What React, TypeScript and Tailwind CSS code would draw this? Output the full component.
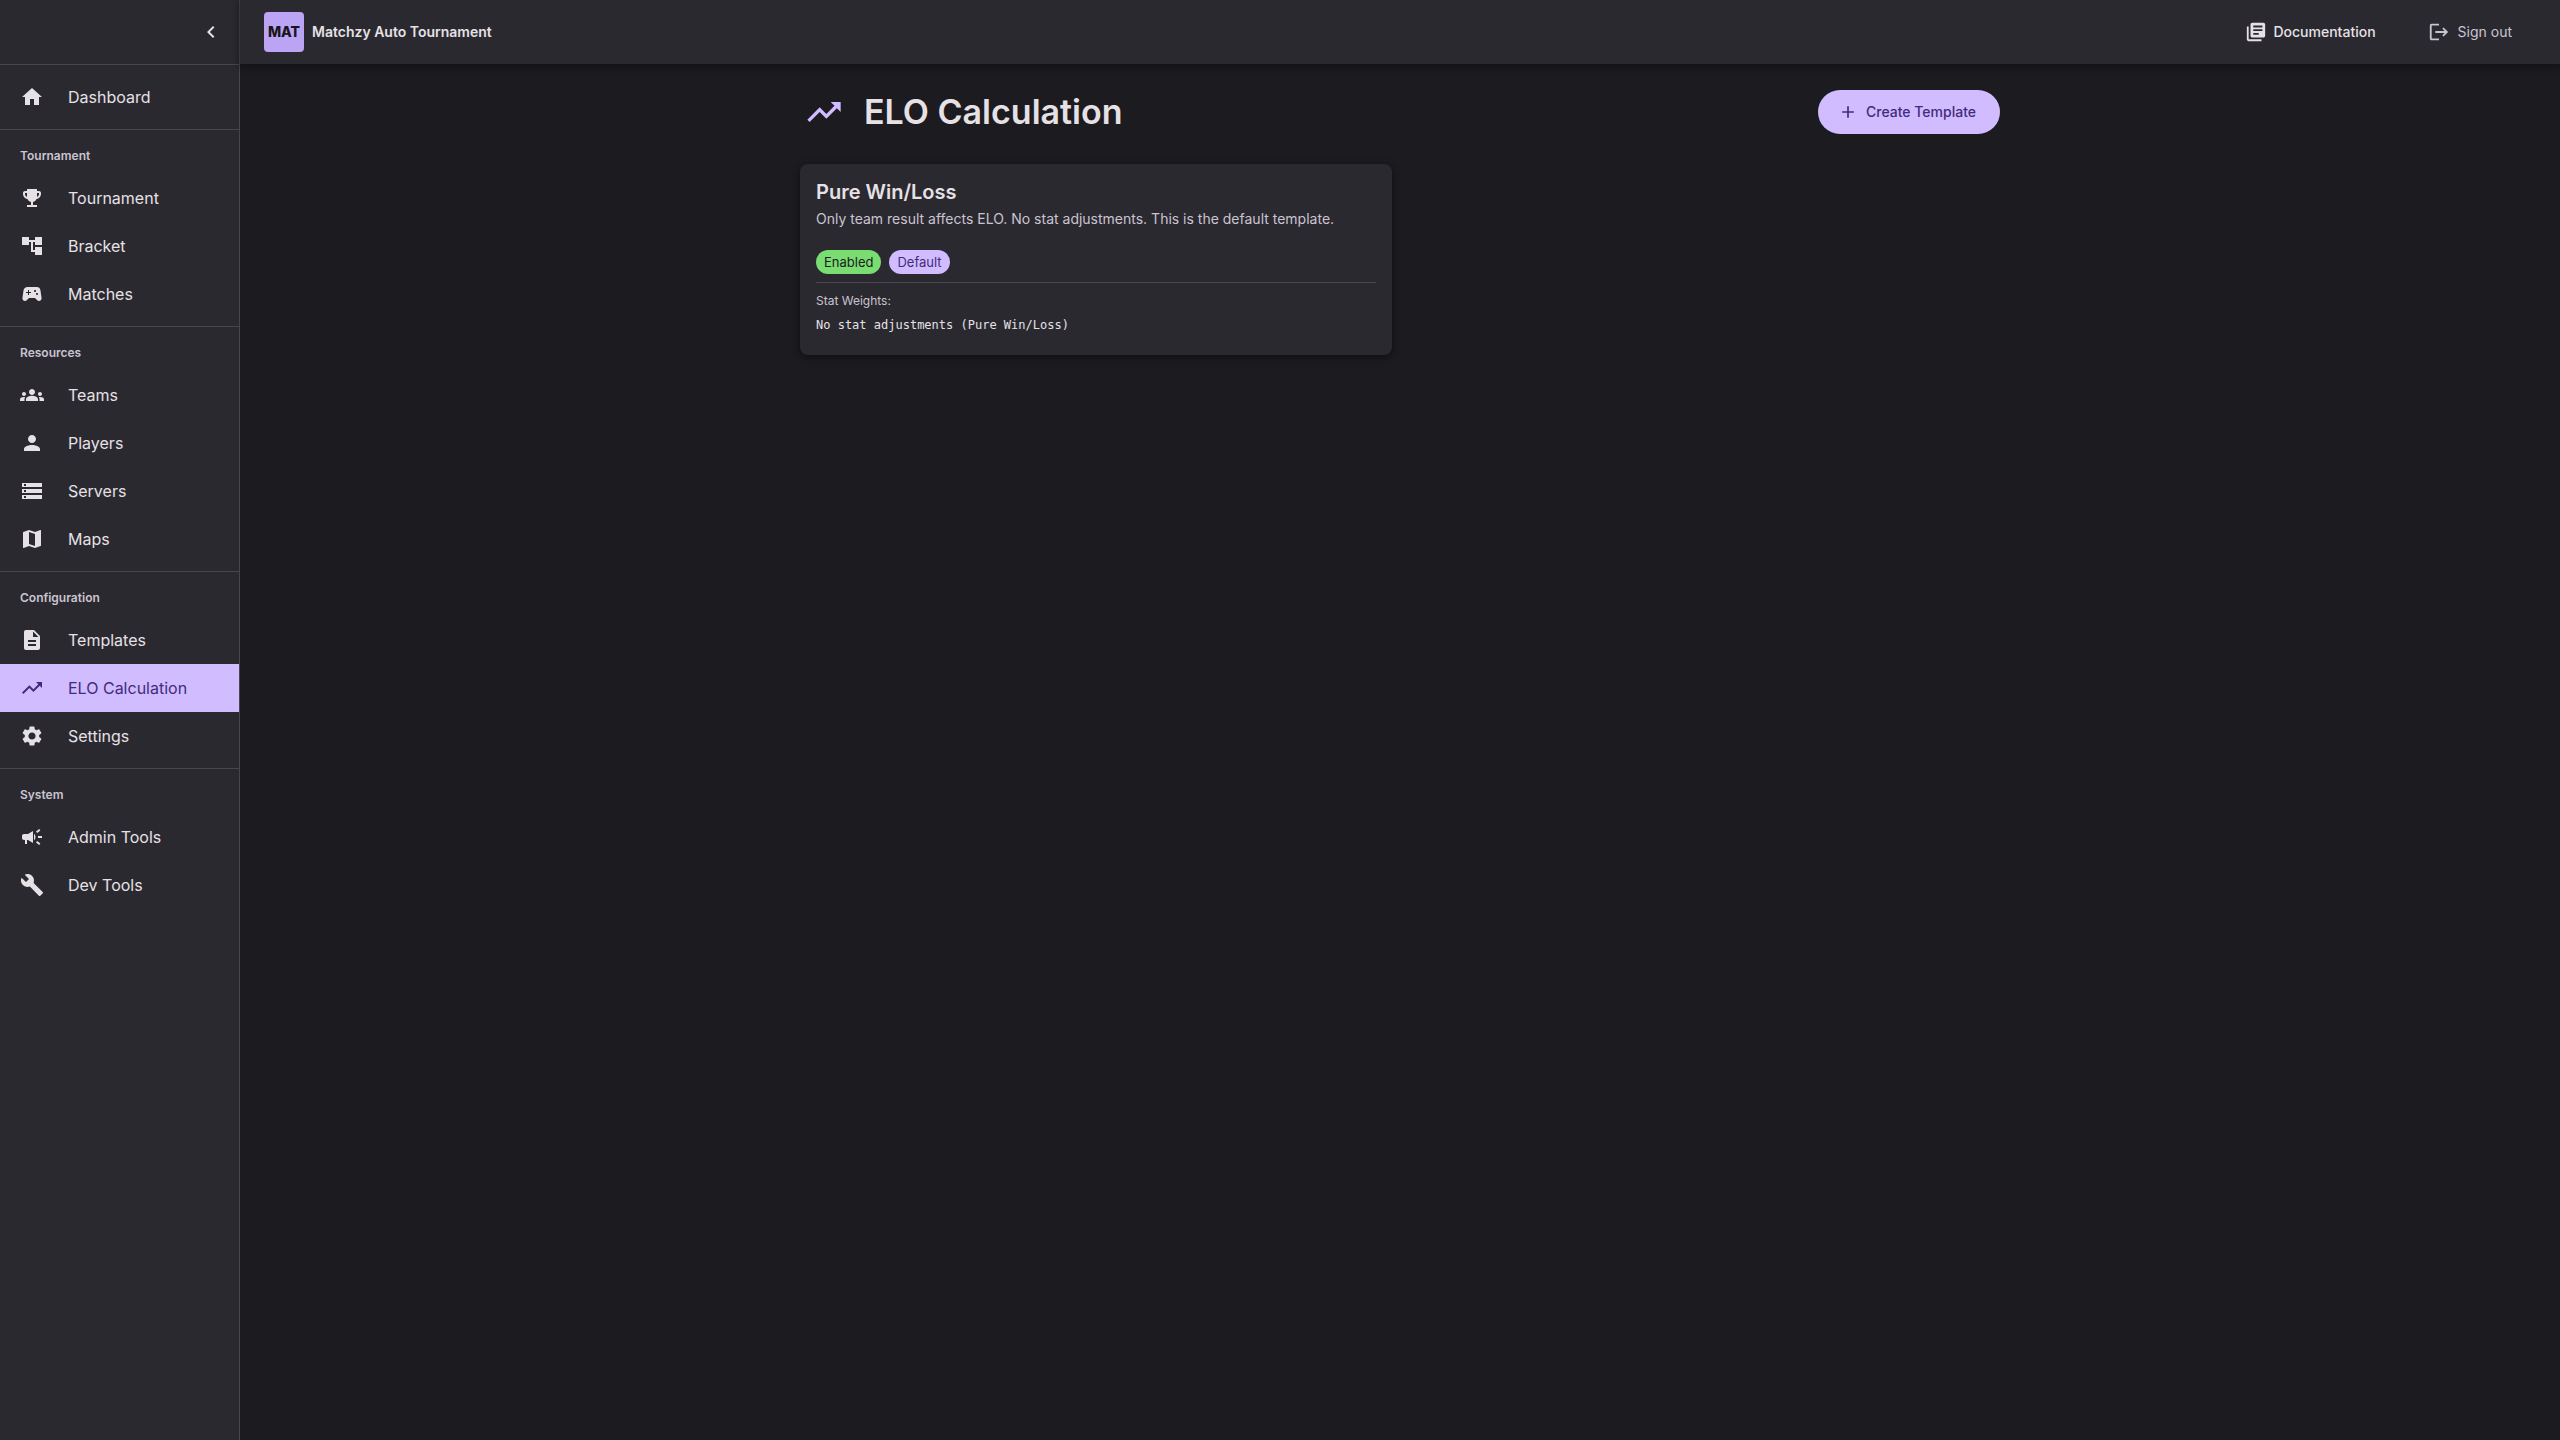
import React from 'react';
import type { IconType } from 'react-icons';
import {
  MdAccountTree,
  MdAdd,
  MdBuild,
  MdCampaign,
  MdChevronLeft,
  MdDescription,
  MdEmojiEvents,
  MdGroups,
  MdHome,
  MdLibraryBooks,
  MdLogout,
  MdMap,
  MdPerson,
  MdSettings,
  MdSportsEsports,
  MdStorage,
  MdTrendingUp,
} from 'react-icons/md';

type NavItem = { label: string; href: string; icon: IconType };
type NavSection = { title?: string; items: NavItem[] };

const navSections: NavSection[] = [
  { items: [{ label: 'Dashboard', href: '#dashboard', icon: MdHome }] },
  {
    title: 'Tournament',
    items: [
      { label: 'Tournament', href: '#tournament', icon: MdEmojiEvents },
      { label: 'Bracket', href: '#bracket', icon: MdAccountTree },
      { label: 'Matches', href: '#matches', icon: MdSportsEsports },
    ],
  },
  {
    title: 'Resources',
    items: [
      { label: 'Teams', href: '#teams', icon: MdGroups },
      { label: 'Players', href: '#players', icon: MdPerson },
      { label: 'Servers', href: '#servers', icon: MdStorage },
      { label: 'Maps', href: '#maps', icon: MdMap },
    ],
  },
  {
    title: 'Configuration',
    items: [
      { label: 'Templates', href: '#templates', icon: MdDescription },
      { label: 'ELO Calculation', href: '#elo', icon: MdTrendingUp },
      { label: 'Settings', href: '#settings', icon: MdSettings },
    ],
  },
  {
    title: 'System',
    items: [
      { label: 'Admin Tools', href: '#admin', icon: MdCampaign },
      { label: 'Dev Tools', href: '#dev', icon: MdBuild },
    ],
  },
];

function Sidebar({ active }: { active: string }) {
  return (
    <aside className="w-60 shrink-0 border-r border-[#48464c] bg-[#2b2930]">
      <div className="flex h-16 items-center justify-end px-2">
        <button aria-label="Collapse menu" className="rounded-full p-2 text-[#e6e1e5]">
          <MdChevronLeft className="size-6" />
        </button>
      </div>
      <nav>
        {navSections.map((section) => (
          <div key={section.title ?? 'main'} className="border-t border-[#48464c] py-2">
            {section.title && (
              <h2 className="px-5 py-2 text-xs leading-5 font-semibold text-[#cac4d0]">
                {section.title}
              </h2>
            )}
            {section.items.map((item) => (
              <a
                key={item.label}
                href={item.href}
                className={`flex h-12 items-center gap-6 px-5 text-base ${
                  item.label === active ? 'bg-[#d0bcff] text-[#432b7c]' : 'text-[#e6e1e5]'
                }`}
              >
                <item.icon className="size-6 shrink-0" />
                {item.label}
              </a>
            ))}
          </div>
        ))}
      </nav>
    </aside>
  );
}

function Header() {
  return (
    <header className="z-10 flex h-16 items-center justify-between bg-[#2b2930] px-6 shadow-[0_2px_6px_2px_rgba(0,0,0,0.3)]">
      <div className="flex items-center gap-2">
        <div className="flex size-10 items-center justify-center rounded bg-[#bca4f5] text-sm font-extrabold text-[#18161c]">
          MAT
        </div>
        <span className="text-sm font-semibold">Matchzy Auto Tournament</span>
      </div>
      <div className="flex items-center gap-5 pr-2">
        <a href="#docs" className="flex items-center gap-1.5 px-4 py-2 text-sm font-medium">
          <MdLibraryBooks className="size-[22px]" />
          Documentation
        </a>
        <button className="flex items-center gap-2 px-4 py-2 text-sm text-[#cac4d0]">
          <MdLogout className="size-[22px]" />
          Sign out
        </button>
      </div>
    </header>
  );
}

function TemplateCard() {
  return (
    <article className="rounded-lg bg-[#2b2930] px-4 pt-4 pb-5 shadow-[0_2px_6px_2px_rgba(0,0,0,0.3)]">
      <h2 className="text-xl leading-6 font-semibold">Pure Win/Loss</h2>
      <p className="text-sm leading-[30px] text-[#cac4d0]">
        Only team result affects ELO. No stat adjustments. This is the default template.
      </p>
      <div className="mt-4 flex gap-2 pb-2 text-[13px] leading-6">
        <span className="rounded-full bg-[#79dd72] px-2 text-[#1c1b1f]">Enabled</span>
        <span className="rounded-full bg-[#d0bcff] px-2 text-[#432b7c]">Default</span>
      </div>
      <div className="border-t border-[#48464c] pt-2">
        <p className="text-xs leading-5 text-[#cac4d0]">Stat Weights:</p>
        <p className="mt-1 font-['DejaVu_Sans_Mono',monospace] text-xs leading-5">
          No stat adjustments (Pure Win/Loss)
        </p>
      </div>
    </article>
  );
}

export default function App() {
  return (
    <div className="flex min-h-screen bg-[#1c1b1f] font-[Inter,sans-serif] text-[#e6e1e5]">
      <Sidebar active="ELO Calculation" />
      <div className="flex min-w-0 flex-1 flex-col">
        <Header />
        <main className="mx-auto w-full max-w-[1200px] py-6">
          <div className="mb-7 flex min-h-12 items-center justify-between">
            <div className="flex items-center gap-5 pl-1">
              <MdTrendingUp className="size-10 text-[#d0bcff]" />
              <h1 className="text-[34px] leading-12 font-semibold">ELO Calculation</h1>
            </div>
            <button className="flex h-11 items-center gap-2 rounded-full bg-[#d0bcff] pr-6 pl-5 text-sm font-medium text-[#432b7c]">
              <MdAdd className="size-5" />
              Create Template
            </button>
          </div>
          <div className="grid grid-cols-2 gap-4">
            <TemplateCard />
          </div>
        </main>
      </div>
    </div>
  );
}
